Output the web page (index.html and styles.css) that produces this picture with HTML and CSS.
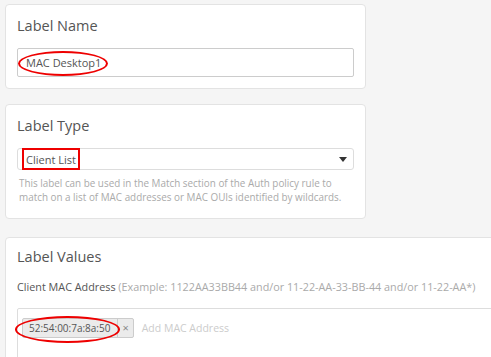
FILE: index.html
```html
<!DOCTYPE html>
<html>
<head>
<meta charset="utf-8">
<link rel="stylesheet" href="styles.css">
</head>
<body>
<div class="page">
  <section class="card">
    <h2 class="card-title">Label Name</h2>
    <div class="text-input">
      <span class="value">MAC Desktop1</span>
      <span class="mark-ellipse mark-name"></span>
    </div>
  </section>

  <section class="card card-type">
    <h2 class="card-title">Label Type</h2>
    <div class="select">
      <span class="value">Client List</span>
      <span class="caret"></span>
      <span class="mark-rect"></span>
    </div>
    <p class="help">This label can be used in the Match section of the Auth policy rule to match on a list of MAC addresses or MAC OUIs identified by wildcards.</p>
  </section>

  <section class="card card-wide">
    <h2 class="card-title">Label Values</h2>
    <div class="field-label">Client MAC Address <span class="hint">(Example: 1122AA33BB44 and/or 11-22-AA-33-BB-44 and/or 11-22-AA*)</span></div>
    <div class="tag-input">
      <span class="tag"><span class="tag-text">52:54:00:7a:8a:50</span><span class="tag-x">×</span></span>
      <span class="placeholder">Add MAC Address</span>
      <span class="mark-ellipse mark-tag"></span>
    </div>
  </section>
</div>
</body>
</html>
```

FILE: styles.css
```css
html, body {
  margin: 0;
  padding: 0;
  background: #f5f5f5;
  overflow: hidden;
  height: 357px;
}

.page {
  display: flex;
  flex-direction: column;
  align-items: flex-start;
  gap: 15px;
  padding: 4px 0 0 5px;
  font-family: "Open Sans", "Liberation Sans", sans-serif;
  color: #555;
}

.card {
  box-sizing: border-box;
  width: 361px;
  background: #fff;
  border: 1px solid #e3e3e3;
  border-radius: 4px;
  padding: 10px 11px 11px 11px;
}

.card-type {
  padding-bottom: 14px;
}

.card-wide {
  width: 600px;
  margin-top: 3px;
  padding-top: 8px;
  padding-bottom: 0;
  height: 140px;
}

.card-title {
  margin: 0 0 11px 0;
  font-size: 14.5px;
  line-height: 22px;
  font-weight: 400;
  color: #555;
}

.text-input {
  position: relative;
  box-sizing: border-box;
  height: 29px;
  width: 337px;
  border: 1px solid #ccc;
  border-radius: 2px;
  display: flex;
  align-items: center;
  padding-left: 8px;
  font-size: 11px;
  color: #555;
}

.select {
  position: relative;
  box-sizing: border-box;
  height: 22px;
  width: 337px;
  border: 1px solid #ddd;
  border-radius: 3px;
  display: flex;
  align-items: center;
  padding-left: 8px;
  font-size: 11px;
  color: #555;
}

.caret {
  margin-left: auto;
  margin-right: 6px;
  width: 0;
  height: 0;
  border-left: 4px solid transparent;
  border-right: 4px solid transparent;
  border-top: 5px solid #333;
}

.help {
  margin: 6px 0 0 2px;
  font-size: 9.9px;
  line-height: 14px;
  color: #aaa;
  width: 330px;
}

.field-label {
  font-size: 10.8px;
  line-height: 16px;
  color: #555;
  white-space: nowrap;
}

.hint {
  color: #aaa;
}

.tag-input {
  position: relative;
  box-sizing: border-box;
  margin-top: 13px;
  width: 600px;
  height: 80px;
  border: 1px solid #ddd;
  border-radius: 2px;
  padding: 9px 4px;
  display: flex;
  align-items: flex-start;
  gap: 8px;
}

.tag {
  display: flex;
  align-items: center;
  height: 20px;
  box-sizing: border-box;
  background: #ebebeb;
  border: 1px solid #ccc;
  border-radius: 2px;
  font-size: 10px;
  color: #555;
}

.tag-text {
  padding: 0 7px 0 6px;
}

.tag-x {
  padding: 0 4px;
  border-left: 1px solid #ccc;
  color: #888;
  font-size: 11px;
  height: 18px;
  line-height: 18px;
}

.placeholder {
  font-size: 10.5px;
  line-height: 20px;
  color: #ccc;
}

.mark-ellipse {
  position: absolute;
  border: 2px solid #e00;
  border-radius: 50%;
  box-sizing: border-box;
}

.mark-name {
  left: 0px;
  top: 2px;
  width: 90px;
  height: 25px;
}

.mark-tag {
  left: -3px;
  top: 7px;
  width: 105px;
  height: 27px;
}

.mark-rect {
  position: absolute;
  left: 4px;
  top: -1px;
  width: 58px;
  height: 22px;
  border: 2px solid #e00;
  box-sizing: border-box;
}
```
